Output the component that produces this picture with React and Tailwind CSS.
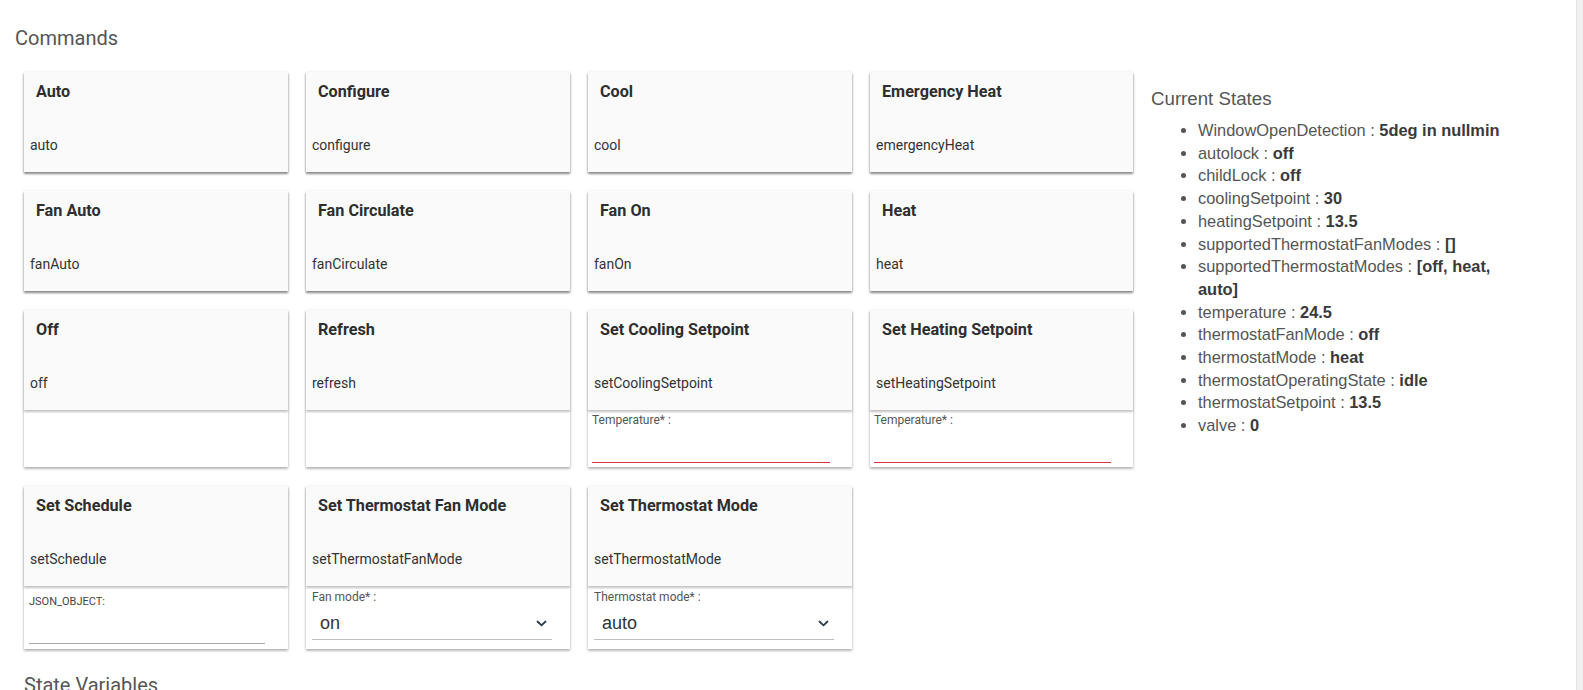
import React from "react";

const cards = [
  { t: "Auto", s: "auto" },
  { t: "Configure", s: "configure" },
  { t: "Cool", s: "cool" },
  { t: "Emergency Heat", s: "emergencyHeat" },
  { t: "Fan Auto", s: "fanAuto" },
  { t: "Fan Circulate", s: "fanCirculate" },
  { t: "Fan On", s: "fanOn" },
  { t: "Heat", s: "heat" },
  { t: "Off", s: "off", extra: "empty" },
  { t: "Refresh", s: "refresh", extra: "empty" },
  { t: "Set Cooling Setpoint", s: "setCoolingSetpoint", extra: "temp" },
  { t: "Set Heating Setpoint", s: "setHeatingSetpoint", extra: "temp" },
  { t: "Set Schedule", s: "setSchedule", extra: "json" },
  { t: "Set Thermostat Fan Mode", s: "setThermostatFanMode", extra: "select", label: "Fan mode* :", value: "on" },
  { t: "Set Thermostat Mode", s: "setThermostatMode", extra: "select", label: "Thermostat mode* :", value: "auto" },
];

const states = [
  ["WindowOpenDetection", "5deg in nullmin"],
  ["autolock", "off"],
  ["childLock", "off"],
  ["coolingSetpoint", "30"],
  ["heatingSetpoint", "13.5"],
  ["supportedThermostatFanModes", "[]"],
  ["supportedThermostatModes", "[off, heat, auto]"],
  ["temperature", "24.5"],
  ["thermostatFanMode", "off"],
  ["thermostatMode", "heat"],
  ["thermostatOperatingState", "idle"],
  ["thermostatSetpoint", "13.5"],
  ["valve", "0"],
];

function Chevron() {
  return (
    <svg width="11" height="7" viewBox="0 0 11 7" className="block">
      <path d="M1.5 1.5 L5.5 5.3 L9.5 1.5" fill="none" stroke="#2d3a4a" strokeWidth="1.8" strokeLinecap="round" strokeLinejoin="round" />
    </svg>
  );
}

function Extra({ c }) {
  if (!c.extra) return null;
  if (c.extra === "empty") return <div className="flex-1 bg-white" />;
  if (c.extra === "temp")
    return (
      <div className="flex-1 bg-white pl-[4px] pr-[22px] pt-[2px] pb-[4px]">
        <div className="text-[12px] leading-4 text-[#555]">Temperature* :</div>
        <div className="h-[35px] border-b border-[#d8323e]" />
      </div>
    );
  if (c.extra === "json")
    return (
      <div className="flex-1 bg-white pl-[5px] pr-[23px] pt-[8px] pb-[5px]">
        <div className="text-[11px] leading-4 text-[#444]">JSON_OBJECT:</div>
        <div className="h-[34px] border-b border-[#a8a8a8]" />
      </div>
    );
  return (
    <div className="flex-1 bg-white pl-[6px] pr-[18px] pt-[3px] pb-[9px]">
      <div className="text-[12px] leading-4 text-[#555]">{c.label}</div>
      <div className="flex h-[35px] items-center justify-between border-b border-[#bdbdbd] pl-[8px] pr-[5px] pt-[2px]">
        <span className="text-[18px] leading-6 text-[#333]" style={{ fontFamily: '"Liberation Sans", Arial, sans-serif' }}>
          {c.value}
        </span>
        <Chevron />
      </div>
    </div>
  );
}

function Card({ c }) {
  return (
    <div className="flex flex-col bg-white shadow-[0_1px_3px_rgba(0,0,0,0.22),0_2px_2px_rgba(0,0,0,0.16)]">
      <div className="relative h-[100px] bg-[#fafafa] pl-[6px] pt-[10px] shadow-[0_2px_2px_rgba(0,0,0,0.24)]">
        <div className="pl-[6px] text-[16.2px] font-bold leading-5 text-[#2e2e2e]">{c.t}</div>
        <div className="mt-[33px] text-[14px] leading-5 text-[#333]">{c.s}</div>
      </div>
      <Extra c={c} />
    </div>
  );
}

export default function App() {
  return (
    <div className="flex h-[690px] w-full overflow-hidden bg-white" style={{ fontFamily: 'Roboto, "Noto Sans", sans-serif' }}>
      <div className="flex-1 pl-[15px]">
        <h2 className="mt-[24px] text-[20px] font-normal leading-7 text-[#555]">Commands</h2>
        <div className="mt-[20px] flex items-start">
          <div className="ml-[9px] grid grid-cols-[264px_264px_264px_263px] gap-x-[18px] gap-y-[19px]">
            {cards.map((c) => (
              <Card key={c.t} c={c} />
            ))}
          </div>
          <div className="ml-[18px] w-[375px] pt-[17px]" style={{ fontFamily: '"Liberation Sans", Arial, sans-serif' }}>
            <h3 className="text-[18.7px] font-normal leading-5 text-[#555]">Current States</h3>
            <ul className="mt-[10px] list-disc pl-[47px] text-[16.4px] leading-[22.7px] text-[#555]">
              {states.map(([k, v]) => (
                <li key={k}>
                  {k} : <b className="font-bold text-[#3a3a3a]">{v}</b>
                </li>
              ))}
            </ul>
          </div>
        </div>
        <h2 className="ml-[9px] mt-[22px] text-[20px] font-normal leading-7 text-[#555]">State Variables</h2>
      </div>
      <div className="h-full w-[7px] border-l border-[#e3e3e3] bg-[#f1f1f1]" />
    </div>
  );
}
